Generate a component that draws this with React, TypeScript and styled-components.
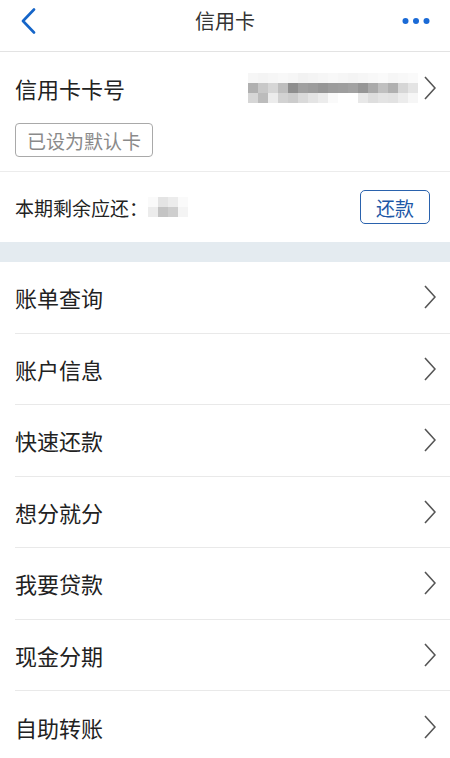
import React from 'react'
import styled, { createGlobalStyle } from 'styled-components'

const GlobalStyle = createGlobalStyle`
  html, body {
    margin: 0;
    padding: 0;
    background: #fff;
  }
  body {
    font-family: "Noto Sans CJK SC", "Noto Sans", sans-serif;
    color: #222;
  }
`

const Screen = styled.div`
  width: 450px;
  height: 758px;
  overflow: hidden;
  background: #fff;
`

const NavBar = styled.div`
  height: 52px;
  box-sizing: border-box;
  display: flex;
  align-items: center;
  justify-content: space-between;
  padding: 0 20px 9px 20px;
  border-bottom: 1px solid #e3e3e3;
`

const NavButton = styled.div`
  width: 40px;
  height: 30px;
  display: flex;
  align-items: center;
  justify-content: ${({ $right }) => ($right ? 'flex-end' : 'flex-start')};
`

const NavTitle = styled.div`
  font-size: 20px;
  color: #333;
  line-height: 1;
`

const CardSection = styled.div`
  padding: 0 14px 14px 15px;
  border-bottom: 1px solid #ececec;
`

const CardRow = styled.div`
  height: 71px;
  display: flex;
  align-items: center;
  justify-content: space-between;
`

const RowLabel = styled.div`
  font-size: ${({ $size }) => $size || 21}px;
  color: #222;
  line-height: 1;
`

const RightGroup = styled.div`
  display: flex;
  align-items: center;
  gap: 6px;
`

const Mosaic = styled.div`
  display: grid;
  grid-template-columns: repeat(${({ $cols }) => $cols}, ${({ $cell }) => $cell}px);
  grid-auto-rows: ${({ $rowH }) => $rowH}px;
`

const Cell = styled.div``

const Badge = styled.div`
  display: inline-flex;
  align-items: center;
  height: 32px;
  padding: 0 11px;
  border: 1px solid #a9a9a9;
  border-radius: 4px;
  font-size: 19px;
  color: #8a8a8a;
  line-height: 1;
`

const RepayRow = styled.div`
  height: 70px;
  display: flex;
  align-items: center;
  justify-content: space-between;
  padding: 0 20px 0 15px;
`

const RepayLeft = styled.div`
  display: flex;
  align-items: center;
`

const RepayButton = styled.div`
  width: 68px;
  height: 32px;
  border: 1px solid #2a62ad;
  border-radius: 5px;
  display: flex;
  align-items: center;
  justify-content: center;
  font-size: 19px;
  color: #1d57a6;
  line-height: 1;
`

const Band = styled.div`
  height: 20px;
  background: #e4ebf0;
`

const MenuList = styled.div`
  display: flex;
  flex-direction: column;
`

const MenuItem = styled.div`
  height: 71.5px;
  display: flex;
  align-items: center;
  justify-content: space-between;
  margin-left: 15px;
  padding-right: 14px;
  box-sizing: border-box;
  border-bottom: ${({ $last }) => ($last ? 'none' : '1px solid #e9e9e9')};
`

const Chevron = () => (
  <svg width="12" height="24" viewBox="0 0 12 24">
    <path d="M1 1 L11 12 L1 23" fill="none" stroke="#555" strokeWidth="1.6" strokeLinejoin="miter" />
  </svg>
)

const BackIcon = () => (
  <svg width="16" height="26" viewBox="0 0 16 26">
    <path d="M14 1.5 L3 13 L14 24.5" fill="none" stroke="#1565c8" strokeWidth="2.6" strokeLinecap="round" strokeLinejoin="round" />
  </svg>
)

const MoreIcon = () => (
  <svg width="28" height="8" viewBox="0 0 28 8">
    <circle cx="3.5" cy="4" r="3" fill="#1a6ad6" />
    <circle cx="14" cy="4" r="3" fill="#1a6ad6" />
    <circle cx="24.5" cy="4" r="3" fill="#1a6ad6" />
  </svg>
)

// blurred card number, grey levels per mosaic cell
const cardMosaic = [
  [246, 244, 246, 248, 246, 242, 244, 246, 248, 246, 244, 246, 248, 250, 246, 248, 250],
  [176, 200, 214, 190, 142, 160, 156, 150, 156, 158, 162, 150, 170, 192, 176, 214, 228],
  [214, 188, 236, 210, 204, 218, 228, 236, 250, 255, 255, 232, 222, 228, 226, 236, 246],
]

const amountMosaic = [
  [250, 228, 236, 250],
  [236, 196, 206, 244],
]

const MosaicBlock = ({ data, cell, rowH }) => (
  <Mosaic $cols={data[0].length} $cell={cell} $rowH={rowH}>
    {data.flat().map((g, i) => (
      <Cell key={i} style={{ background: `rgb(${g},${g},${g})` }} />
    ))}
  </Mosaic>
)

const menus = ['账单查询', '账户信息', '快速还款', '想分就分', '我要贷款', '现金分期', '自助转账']

const App: React.FC = () => {
  return (
    <Screen>
      <GlobalStyle />
      <NavBar>
        <NavButton>
          <BackIcon />
        </NavButton>
        <NavTitle>信用卡</NavTitle>
        <NavButton $right>
          <MoreIcon />
        </NavButton>
      </NavBar>

      <CardSection>
        <CardRow>
          <RowLabel $size={22}>信用卡卡号</RowLabel>
          <RightGroup>
            <MosaicBlock data={cardMosaic} cell={10} rowH={10} />
            <Chevron />
          </RightGroup>
        </CardRow>
        <Badge>已设为默认卡</Badge>
      </CardSection>

      <RepayRow>
        <RepayLeft>
          <RowLabel $size={19}>本期剩余应还：</RowLabel>
          <MosaicBlock data={amountMosaic} cell={10} rowH={10} />
        </RepayLeft>
        <RepayButton>还款</RepayButton>
      </RepayRow>

      <Band />

      <MenuList>
        {menus.map((m, i) => (
          <MenuItem key={m} $last={i === menus.length - 1}>
            <RowLabel $size={22}>{m}</RowLabel>
            <Chevron />
          </MenuItem>
        ))}
      </MenuList>
    </Screen>
  )
}

export default App
